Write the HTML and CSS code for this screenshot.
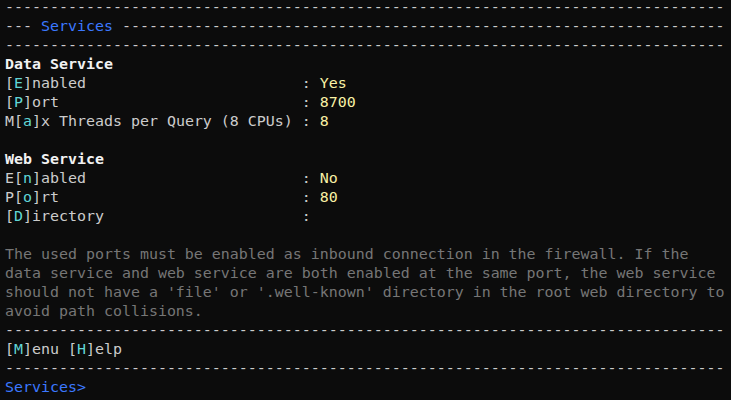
FILE: index.html
```html
<!DOCTYPE html>
<html>
<head>
<meta charset="utf-8">
<link rel="stylesheet" href="styles.css">
</head>
<body>
<div class="term">
<div class="row">--------------------------------------------------------------------------------</div>
<div class="row">--- <span class="blue">Services</span> -------------------------------------------------------------------</div>
<div class="row">--------------------------------------------------------------------------------</div>
<div class="row bold">Data Service</div>
<div class="row">[<span class="key">E</span>]nabled                        : <span class="val">Yes</span></div>
<div class="row">[<span class="key">P</span>]ort                           : <span class="val">8700</span></div>
<div class="row">M[<span class="key">a</span>]x Threads per Query (8 CPUs) : <span class="val">8</span></div>
<div class="row"> </div>
<div class="row bold">Web Service</div>
<div class="row">E[<span class="key">n</span>]abled                        : <span class="val">No</span></div>
<div class="row">P[<span class="key">o</span>]rt                           : <span class="val">80</span></div>
<div class="row">[<span class="key">D</span>]irectory                      :</div>
<div class="row"> </div>
<div class="row gray">The used ports must be enabled as inbound connection in the firewall. If the</div>
<div class="row gray">data service and web service are both enabled at the same port, the web service</div>
<div class="row gray">should not have a 'file' or '.well-known' directory in the root web directory to</div>
<div class="row gray">avoid path collisions.</div>
<div class="row">--------------------------------------------------------------------------------</div>
<div class="row">[<span class="key">M</span>]enu [<span class="key">H</span>]elp</div>
<div class="row">--------------------------------------------------------------------------------</div>
<div class="row blue">Services&gt;</div>
</div>
</body>
</html>
```
FILE: styles.css
```css
html, body {
  margin: 0;
  padding: 0;
  background: #0c0c0c;
  height: 100%;
  overflow: hidden;
}
.term {
  margin-top: -2px;
  padding-left: 5px;
  font-family: "DejaVu Sans Mono", "Liberation Mono", monospace;
  font-size: 14.95px;
  color: #cccccc;
}
.row {
  white-space: pre;
  height: 19px;
  line-height: 19px;
}
.bold {
  font-weight: bold;
  color: #f2f2f2;
}
.blue { color: #3b78ff; }
.key { color: #61d6d6; }
.val { color: #f9f1a5; }
.gray { color: #767676; }
```
